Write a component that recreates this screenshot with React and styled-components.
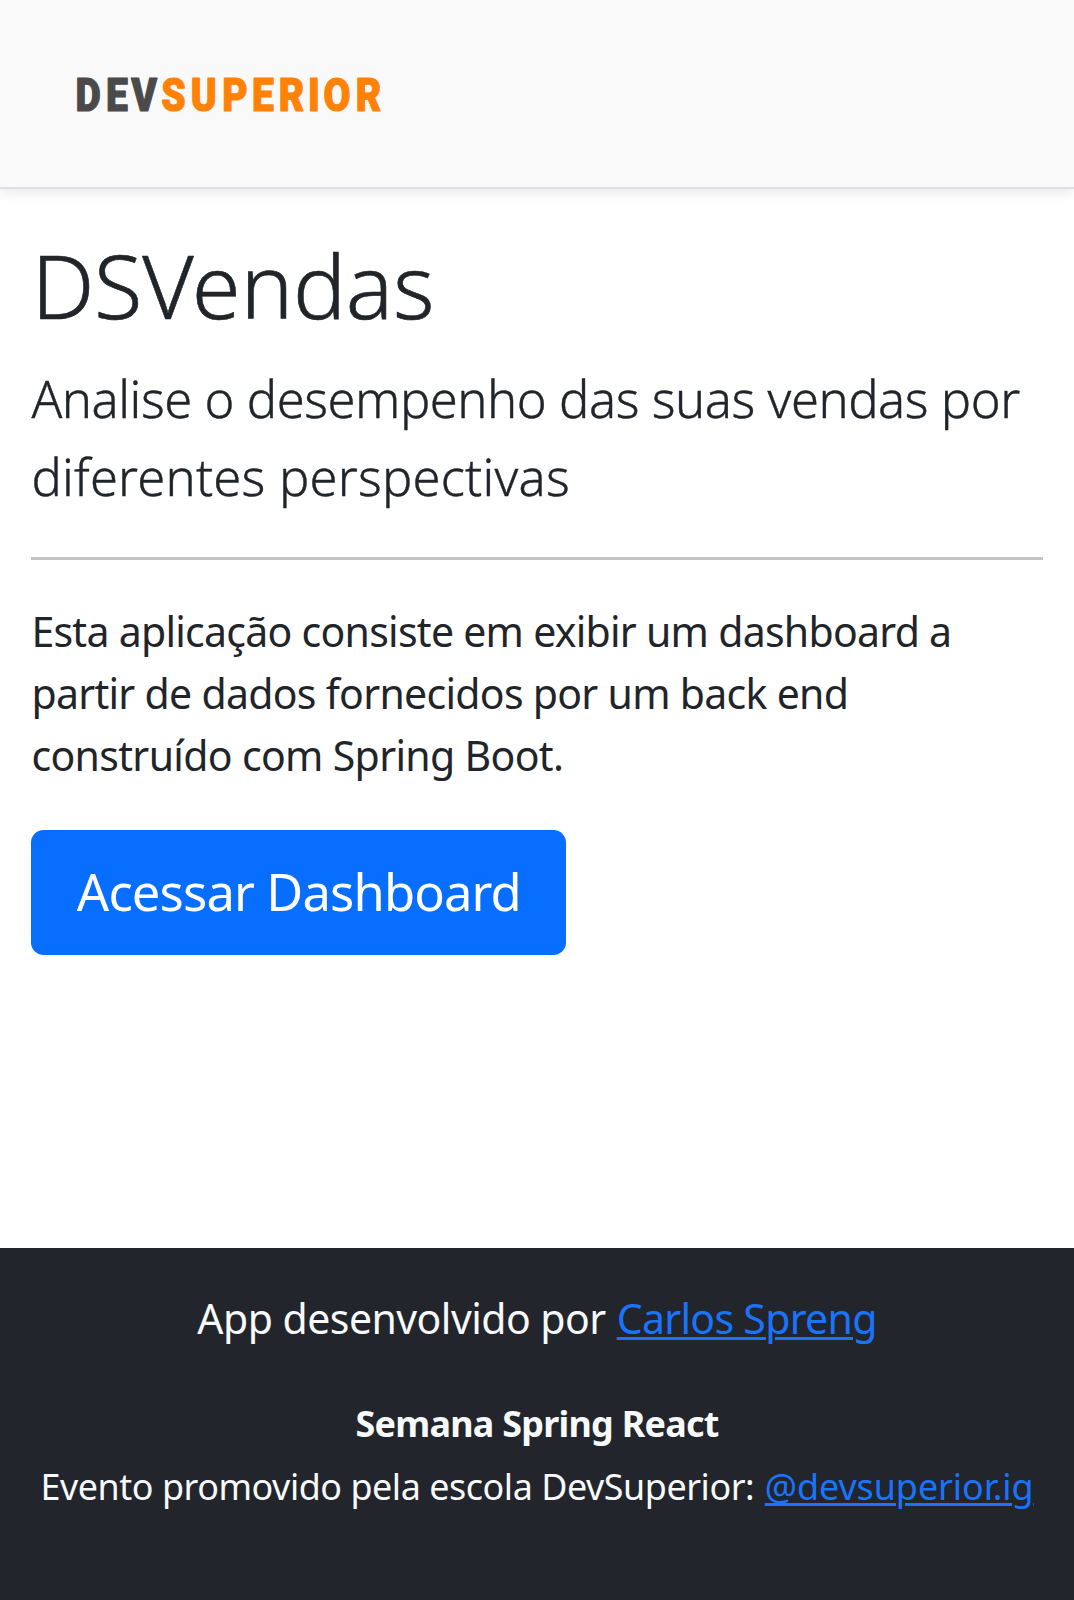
import React from "react";
import styled, { createGlobalStyle } from "styled-components";

const GlobalStyle = createGlobalStyle`
  *, *::before, *::after { box-sizing: border-box; }
  body {
    margin: 0;
    background: #fff;
    color: #212529;
    font-family: "Noto Sans", "Open Sans", sans-serif;
    font-size: 41px;
    line-height: 62.8px;
  }
`;

const Page = styled.div`
  display: flex;
  flex-direction: column;
  height: 1600px;
  overflow: hidden;
`;

const Header = styled.header`
  flex: none;
  display: flex;
  align-items: center;
  height: 189px;
  padding: 0 60px;
  background: #f9f9f9;
  border-bottom: 2px solid #dfdfea;
  box-shadow: 0 4px 12px rgba(0, 0, 0, 0.09);
`;

const Logo = styled.svg`
  display: block;
  width: 340px;
  height: 80px;
  overflow: visible;
  font-family: Roboto, sans-serif;
  font-weight: 900;
  font-size: 46.5px;
  text-anchor: middle;
  stroke-width: 1.2;
  stroke-linejoin: round;
`;

const Main = styled.main`
  flex: 1;
  padding: 41.5px 31.4px 0;
`;

const Line = styled.span`
  display: block;
  white-space: nowrap;
  letter-spacing: ${(p) => p.$track || 0}px;
`;

const Title = styled.h1`
  margin: 0 0 21px;
  font-size: 88.5px;
  font-weight: 300;
  line-height: 108.5px;
  -webkit-text-stroke: 0.6px currentColor;
`;

const Lead = styled.p`
  margin: 0 0 41px;
  font-size: 50.7px;
  font-weight: 300;
  line-height: 78px;
  -webkit-text-stroke: 0.4px currentColor;
`;

const Divider = styled.hr`
  height: 2.6px;
  margin: 0 0 40px;
  border: 0;
  background: #c4c5c6;
`;

const Text = styled.p`
  margin: 0 0 43px;
  line-height: 62.4px;
`;

const Button = styled.a`
  display: flex;
  align-items: center;
  justify-content: center;
  width: 535px;
  height: 125px;
  border-radius: 12.5px;
  background: #076eff;
  color: #fff;
  font-size: 50.7px;
  text-decoration: none;
`;

const Footer = styled.footer`
  flex: none;
  height: 352.5px;
  padding-top: 39.5px;
  background: #22252c;
  color: #f8f9fa;
  text-align: center;
`;

const Credit = styled.p`
  display: flex;
  justify-content: center;
  gap: ${(p) => p.$gap || 0}px;
  margin: 0 0 ${(p) => p.$after || 0}px;
  font-size: ${(p) => p.$size}px;
  font-weight: ${(p) => (p.$bold ? 700 : 400)};
  line-height: 62.4px;
`;

const Link = styled.a`
  color: #1a74fb;
  white-space: nowrap;
  letter-spacing: ${(p) => p.$track || 0}px;
  text-decoration: underline;
  text-decoration-thickness: 2.6px;
  text-underline-offset: 3px;
`;

// The wordmark's letters are condensed: each is centred on its own x.
const CONDENSE = 0.84;
const spread = (centers) => centers.map((x) => (x / CONDENSE).toFixed(1)).join(" ");

function Wordmark() {
  return (
    <Logo viewBox="60 54 340 80" role="img" aria-label="DevSuperior">
      <text y="111.2" transform={`scale(${CONDENSE} 1)`}>
        <tspan fill="#4a4a4a" stroke="#4a4a4a" x={spread([88, 117, 144.2])}>DEV</tspan>
        <tspan fill="#ff8206" stroke="#ff8206" x={spread([173.5, 203.8, 235, 263, 291.6, 314, 337, 368.4])}>SUPERIOR</tspan>
      </text>
    </Logo>
  );
}

export default function App() {
  return (
    <Page>
      <GlobalStyle />
      <Header>
        <Wordmark />
      </Header>
      <Main>
        <Title><Line $track={-0.2}>DSVendas</Line></Title>
        <Lead>
          <Line $track={-0.45}>Analise o desempenho das suas vendas por</Line>
          <Line $track={0.22}>diferentes perspectivas</Line>
        </Lead>
        <Divider />
        <Text>
          <Line $track={-0.73}>Esta aplicação consiste em exibir um dashboard a</Line>
          <Line $track={-0.71}>partir de dados fornecidos por um back end</Line>
          <Line $track={-0.66}>construído com Spring Boot.</Line>
        </Text>
        <Button href="#dashboard"><Line $track={-0.87}>Acessar Dashboard</Line></Button>
      </Main>
      <Footer>
        <Credit $size={41} $after={44} $gap={11}>
          <Line $track={-0.53}>App desenvolvido por</Line>
          <Link href="#autor" $track={-0.7}>Carlos Spreng</Link>
        </Credit>
        <Credit $size={35.9} $bold><Line $track={-0.73}>Semana Spring React</Line></Credit>
        <Credit $size={35.9} $gap={10.5}>
          <Line $track={-0.45}>Evento promovido pela escola DevSuperior:</Line>
          <Link href="#devsuperior" $track={-0.05}>@devsuperior.ig</Link>
        </Credit>
      </Footer>
    </Page>
  );
}
